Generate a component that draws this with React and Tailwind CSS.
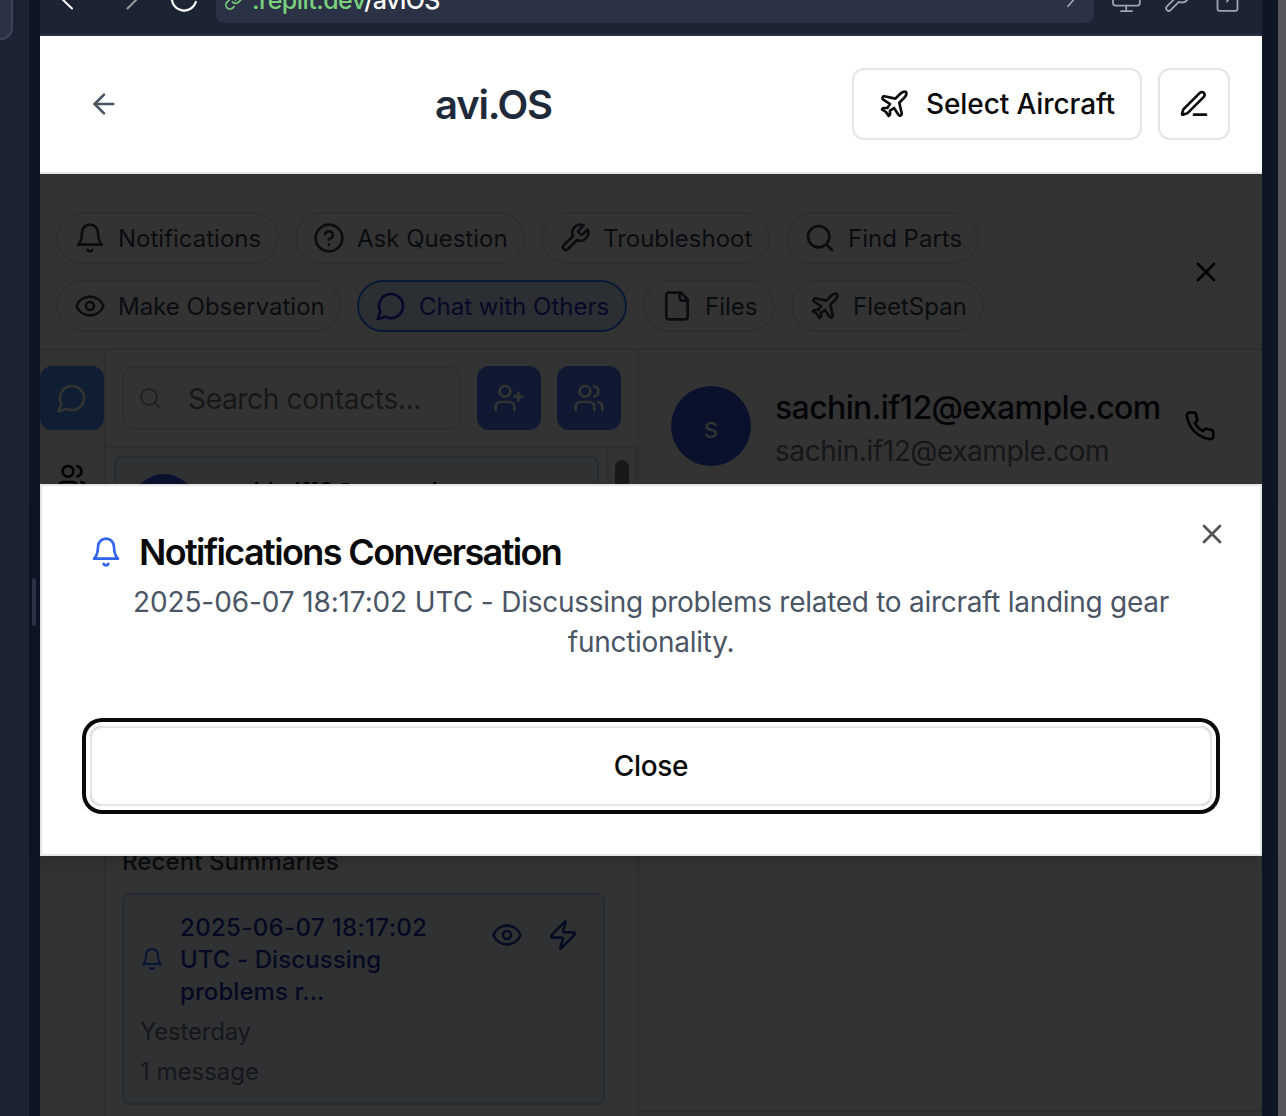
import React from "react";

const ICONS = {
  arrowLeft: ["m12 19-7-7 7-7", "M19 12H5"],
  bell: ["M6 8a6 6 0 0 1 12 0c0 7 3 9 3 9H3s3-2 3-9", "M10.3 21a1.94 1.94 0 0 0 3.4 0"],
  help: ["M12 2a10 10 0 1 0 0 20a10 10 0 1 0 0-20", "M9.09 9a3 3 0 0 1 5.83 1c0 2-3 3-3 3", "M12 17h.01"],
  wrench: ["M14.7 6.3a1 1 0 0 0 0 1.4l1.6 1.6a1 1 0 0 0 1.4 0l3.77-3.77a6 6 0 0 1-7.94 7.94l-6.91 6.91a2.12 2.12 0 0 1-3-3l6.91-6.91a6 6 0 0 1 7.94-7.94l-3.76 3.76z"],
  search: ["M11 3a8 8 0 1 0 0 16a8 8 0 1 0 0-16", "m21 21-4.3-4.3"],
  eye: ["M2.062 12.348a1 1 0 0 1 0-.696 10.75 10.75 0 0 1 19.876 0 1 1 0 0 1 0 .696 10.75 10.75 0 0 1-19.876 0", "M12 9a3 3 0 1 0 0 6a3 3 0 1 0 0-6"],
  chat: ["M7.9 20A9 9 0 1 0 4 16.1L2 22Z"],
  file: ["M15 2H6a2 2 0 0 0-2 2v16a2 2 0 0 0 2 2h12a2 2 0 0 0 2-2V7Z", "M14 2v4a2 2 0 0 0 2 2h4"],
  plane: ["M17.8 19.2 16 11l3.5-3.5C21 6 21.5 4 21 3c-1-.5-3 0-4.5 1.5L13 8 4.8 6.2c-.5-.1-.9.1-1.1.5l-.3.5c-.2.5-.1 1 .3 1.3L9 12l-2 3H4l-1 1 3 2 2 3 1-1v-3l3-2 3.5 5.3c.3.4.8.5 1.3.3l.5-.2c.4-.3.6-.7.5-1.2z"],
  pen: ["M12 20h9", "M16.376 3.622a1 1 0 0 1 3.002 3.002L7.368 18.635a2 2 0 0 1-.855.506l-2.872.838a.5.5 0 0 1-.62-.62l.838-2.872a2 2 0 0 1 .506-.854z"],
  x: ["M18 6 6 18", "m6 6 12 12"],
  users: ["M16 21v-2a4 4 0 0 0-4-4H6a4 4 0 0 0-4 4v2", "M9 3a4 4 0 1 0 0 8a4 4 0 1 0 0-8", "M22 21v-2a4 4 0 0 0-3-3.87", "M16 3.13a4 4 0 0 1 0 7.75"],
  userPlus: ["M16 21v-2a4 4 0 0 0-4-4H6a4 4 0 0 0-4 4v2", "M9 3a4 4 0 1 0 0 8a4 4 0 1 0 0-8", "M19 8v6", "M22 11h-6"],
  phone: ["M22 16.92v3a2 2 0 0 1-2.18 2 19.79 19.79 0 0 1-8.63-3.07 19.5 19.5 0 0 1-6-6 19.79 19.79 0 0 1-3.07-8.67A2 2 0 0 1 4.11 2h3a2 2 0 0 1 2 1.72 12.84 12.84 0 0 0 .7 2.81 2 2 0 0 1-.45 2.11L8.09 9.91a16 16 0 0 0 6 6l1.27-1.27a2 2 0 0 1 2.11-.45 12.84 12.84 0 0 0 2.81.7A2 2 0 0 1 22 16.92z"],
  zap: ["M4 14a1 1 0 0 1-.78-1.63l9.9-10.2a.5.5 0 0 1 .86.46l-1.92 6.02A1 1 0 0 0 13 10h7a1 1 0 0 1 .78 1.63l-9.9 10.2a.5.5 0 0 1-.86-.46l1.92-6.02A1 1 0 0 0 11 14z"],
};

function Icon({ name, className = "size-8" }) {
  return (
    <svg viewBox="0 0 24 24" fill="none" stroke="currentColor" strokeWidth="2" strokeLinecap="round" strokeLinejoin="round" className={`shrink-0 ${className}`}>
      {ICONS[name].map((d) => (
        <path key={d} d={d} />
      ))}
    </svg>
  );
}

// Icon of the browser bar; its upper part is scrolled out of view.
function BarIcon({ width, className, strokeWidth = 2, children }) {
  return (
    <svg width={width} height="34" viewBox={`0 0 ${width} 34`} fill="none" stroke="currentColor" strokeWidth={strokeWidth} strokeLinecap="round" strokeLinejoin="round" className={`shrink-0 ${className}`}>
      {children}
    </svg>
  );
}

function BrowserBar() {
  return (
    <div className="flex h-9 shrink-0 items-start overflow-hidden border-b-2 border-[#2b3245] bg-[#1c2333]">
      <BarIcon width={20} className="ml-4 text-white">
        <path d="M4 -3 16 8.5" />
      </BarIcon>
      <BarIcon width={20} className="ml-[46px] text-[#9a9a9f]">
        <path d="M5.5 8.5 17 -3" />
      </BarIcon>
      <BarIcon width={30} strokeWidth={2.2} className="ml-[26px] text-white">
        <path d="M3.8 -2a12.3 12.3 0 0 0 24 4" />
      </BarIcon>
      <div className="ml-[18px] flex h-[23px] w-[878px] items-start rounded-b-lg bg-[#2b3245]">
        <BarIcon width={22} className="ml-2 text-[#7ad07d]">
          <g transform="translate(0.2 -8.9) scale(0.82)">
            <path d="M10 13a5 5 0 0 0 7.54.54l3-3a5 5 0 0 0-7.07-7.07l-1.72 1.71" />
            <path d="M14 11a5 5 0 0 0-7.54-.54l-3 3a5 5 0 0 0 7.07 7.07l1.71-1.71" />
          </g>
        </BarIcon>
        <div className="-mt-4 ml-[6px] text-[25px] leading-8 font-medium tracking-[-0.55px] whitespace-nowrap text-[#7ad07d]">
          .replit.dev<span className="text-white">/aviOS</span>
        </div>
        <BarIcon width={14} strokeWidth={1.6} className="mr-[14px] ml-auto text-[#a5a8b0]">
          <path d="M2 6.2 10 -3" />
        </BarIcon>
      </div>
      <BarIcon width={30} strokeWidth={1.8} className="ml-[17px] text-[#a0a4ab]">
        <path d="M2 -4V3a2.4 2.4 0 0 0 2.4 2.6h22a2.4 2.4 0 0 0 2.4-2.6V-4M15.2 6V11M10 11.2h11" />
      </BarIcon>
      <BarIcon width={30} className="ml-[21px] text-[#a0a4ab]">
        <g transform="translate(0.6 -14.4) scale(1.2)" strokeWidth="1.5">
          <path d={ICONS.wrench[0]} />
        </g>
      </BarIcon>
      <BarIcon width={26} strokeWidth={1.8} className="ml-[23px] text-[#a0a4ab]">
        <path d="M2.500 -4V8.500a2.400 2.400 0 0 0 2.400 2.400H20.100a2.400 2.400 0 0 0 2.400-2.400V-4M11.800 1.500 14 -1" />
      </BarIcon>
    </div>
  );
}

function AppHeader() {
  return (
    <header className="flex h-[138px] shrink-0 items-center justify-between border-b-2 border-gray-200 bg-white pr-8 pl-12">
      <Icon name="arrowLeft" className="size-8 text-gray-600" />
      <h1 className="mt-0.5 ml-[15px] text-[40px] leading-none font-semibold tracking-[-1.2px] text-gray-800">avi.OS</h1>
      <div className="flex gap-4">
        <button className="flex h-[72px] w-[290px] items-center rounded-xl border-2 border-[#e5e5e5] pl-6 text-[28px] font-medium tracking-[-0.1px] whitespace-nowrap text-[#0a0a0a]">
          <Icon name="plane" />
          <span className="ml-4">Select Aircraft</span>
        </button>
        <button className="flex size-[72px] items-center justify-center rounded-xl border-2 border-[#e5e5e5] text-[#0a0a0a]">
          <Icon name="pen" />
        </button>
      </div>
    </header>
  );
}

function Chip({ icon, label, width, active }) {
  const tone = active ? "border-blue-500 bg-[#d4e6f8] text-[#1e30c0]" : "border-gray-200 text-gray-700";
  return (
    <div className={`flex h-[52px] shrink-0 items-center gap-3 rounded-full border-2 pl-4 text-[24px] whitespace-nowrap ${width} ${tone}`}>
      <Icon name={icon} />
      <span className="pt-0.5">{label}</span>
    </div>
  );
}

function Toolbar() {
  return (
    <div className="flex h-44 shrink-0 items-start justify-between border-b-2 border-gray-200 pt-[38px] pr-10 pl-4">
      <div className="flex flex-col gap-4">
        <div className="flex gap-4">
          <Chip icon="bell" label="Notifications" width="w-[223px]" />
          <Chip icon="help" label="Ask Question" width="w-[230px]" />
          <Chip icon="wrench" label="Troubleshoot" width="w-[229px]" />
          <Chip icon="search" label="Find Parts" width="w-[193px]" />
        </div>
        <div className="flex gap-4">
          <Chip icon="eye" label="Make Observation" width="w-[285px]" />
          <Chip icon="chat" label="Chat with Others" width="w-[270px]" active />
          <Chip icon="file" label="Files" width="w-[132px]" />
          <Chip icon="plane" label="FleetSpan" width="w-[193px]" />
        </div>
      </div>
      <Icon name="x" className="mt-11 size-8 text-black" />
    </div>
  );
}

function Rail() {
  return (
    <nav className="flex w-[66px] shrink-0 flex-col gap-4 border-r-2 border-gray-200 bg-gray-50 pt-4">
      <div className="flex size-16 items-center justify-center rounded-xl bg-[#4b98f8] text-white">
        <Icon name="chat" />
      </div>
      <div className="flex size-16 items-center justify-center text-black">
        <Icon name="users" />
      </div>
    </nav>
  );
}

function ContactColumn() {
  return (
    <section className="flex w-[533px] shrink-0 flex-col border-r-2 border-gray-200">
      <div className="flex h-[98px] shrink-0 gap-4 border-b-2 border-gray-200 pt-4 pl-4">
        <div className="flex h-16 w-[339px] items-center rounded-xl border-2 border-gray-200 pl-3.5 text-[28px] tracking-[-0.33px] whitespace-nowrap text-[#737373]">
          <Icon name="search" className="size-6 text-gray-400" />
          <span className="ml-[26px] pt-0.5">Search contacts...</span>
        </div>
        <div className="flex size-16 items-center justify-center rounded-xl bg-[#4c7cf6] text-white">
          <Icon name="userPlus" />
        </div>
        <div className="flex size-16 items-center justify-center rounded-xl bg-[#4c7cf6] text-white">
          <Icon name="users" />
        </div>
      </div>
      <div className="flex h-[396px] shrink-0 overflow-hidden">
        <div className="w-[501px] shrink-0 pt-2 pl-2">
          <div className="flex h-[120px] w-[485px] rounded-lg border-2 border-blue-200 bg-blue-50 pt-4 pl-4">
            <div className="size-16 rounded-full bg-[#2d55e0]" />
            <span className="mt-0.5 ml-[18px] text-[24px] leading-8 font-medium tracking-[-0.3px] text-black">sachin.if12@example.com</span>
          </div>
        </div>
        <div className="flex flex-1 justify-center border-x-2 border-gray-200 bg-gray-50 pt-3">
          <div className="h-[200px] w-3.5 rounded-full bg-[#7a7a7a]" />
        </div>
      </div>
      <div className="pt-0.5 pl-4">
        <h3 className="text-[24px] leading-8 font-medium tracking-[0.1px] text-gray-700">Recent Summaries</h3>
        <div className="mt-[15px] h-[212px] w-[483px] rounded-lg border-2 border-blue-200 bg-blue-50 pt-[17px] pr-6 pl-4">
          <div className="flex">
            <div className="flex w-10 items-center pb-0.5">
              <Icon name="bell" className="size-6 text-blue-600" />
            </div>
            <div className="w-[290px] text-[24px] leading-8 font-medium tracking-[0.08px] text-[#1e2fa8]">
              <span className="tracking-[0.35px]">2025-06-07 18:17:02</span>
              <br />
              UTC - Discussing
              <br />
              problems r...
            </div>
            <div className="mt-[7px] ml-auto flex gap-6 text-[#1d40b0]">
              <Icon name="eye" />
              <Icon name="zap" />
            </div>
          </div>
          <div className="mt-2 text-[24px] leading-8 tracking-[-0.2px] text-gray-500">Yesterday</div>
          <div className="mt-2 text-[24px] leading-8 text-gray-500">1 message</div>
        </div>
      </div>
    </section>
  );
}

function ChatPane() {
  return (
    <section className="flex flex-1 flex-col">
      <div className="flex h-[760px] shrink-0 items-start pt-9 pl-8">
        <div className="flex size-20 shrink-0 items-center justify-center rounded-full bg-[#2d55e0] pt-1 text-[28px] text-white">s</div>
        <div className="ml-6 whitespace-nowrap">
          <div className="text-[32px] leading-[43px] font-medium tracking-[-0.62px] text-gray-900">sachin.if12@example.com</div>
          <div className="text-[28px] leading-[44px] tracking-[-0.43px] text-gray-500">sachin.if12@example.com</div>
        </div>
        <Icon name="phone" className="mt-6 mr-[46px] ml-auto size-8 text-black" />
      </div>
      <div className="flex-1 border-t-2 border-gray-200" />
    </section>
  );
}

function ConversationDialog() {
  return (
    <div role="dialog" className="absolute inset-x-0 top-[484px] flex h-[372px] flex-col border-2 border-[#e5e5e5] bg-white px-12 pt-12 shadow-lg">
      <h2 className="flex h-9 items-center text-[36px] leading-9 font-semibold tracking-[-1.62px] whitespace-nowrap text-[#0a0a0a]">
        <Icon name="bell" className="size-8 text-[#3164ec]" />
        <span className="ml-[17px]">Notifications Conversation</span>
      </h2>
      <p className="mt-3 text-center text-[28px] leading-10 tracking-[-0.28px] whitespace-nowrap text-gray-600">
        <span className="tracking-[-0.12px]">2025-06-07 18:17:02 UTC - </span>
        Discussing problems related to aircraft landing gear
        <br />
        functionality.
      </p>
      <button className="mt-16 h-20 shrink-0 rounded-xl border-2 border-[#e5e5e5] text-[28px] font-medium tracking-[-0.3px] text-[#0a0a0a] ring-4 ring-[#0a0a0a] ring-offset-4">Close</button>
      <Icon name="x" className="absolute top-8 right-8 size-8 text-[#545454]" />
    </div>
  );
}

export default function App() {
  return (
    <div className="flex h-[1116px] w-[1286px] overflow-hidden bg-[#0e1525] font-[Inter,sans-serif]">
      <aside className="w-[29px] shrink-0 bg-[#1c2333]">
        <div className="h-[40px] w-[13px] rounded-br-xl border-r-2 border-b-2 border-[#3c445c] bg-[#2b3245]" />
      </aside>
      <div className="flex w-[11px] shrink-0 items-start pt-[578px] pl-[3px]">
        <div className="h-12 w-1 rounded-full bg-[#2b3245]" />
      </div>
      <div className="relative flex w-[1222px] shrink-0 flex-col bg-white">
        <BrowserBar />
        <AppHeader />
        <Toolbar />
        <main className="flex min-h-0 flex-1 overflow-hidden">
          <Rail />
          <ContactColumn />
          <ChatPane />
        </main>
        <div className="absolute inset-x-0 top-[174px] bottom-0 bg-black/80" />
        <ConversationDialog />
      </div>
      <div className="ml-4 flex-1 bg-[#57565c]" />
    </div>
  );
}
